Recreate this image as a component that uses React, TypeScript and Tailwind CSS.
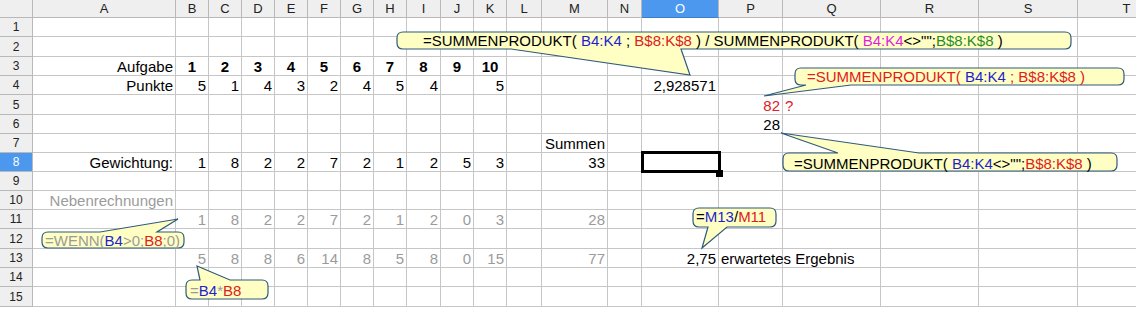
import React from "react";

type Cell = { t: string; a?: "l" | "r" | "c"; c?: string };

const COLS = ["A", "B", "C", "D", "E", "F", "G", "H", "I", "J", "K", "L", "M", "N", "O", "P", "Q", "R", "S", "T"];

const gray = "text-[#9b9b9b]";
const red = "text-[#e0201e]";
const blue = "text-[#1f1fd0]";

// sheet contents, keyed by cell address
const data: Record<string, Cell> = {
  A3: { t: "Aufgabe" },
  A4: { t: "Punkte" },
  A8: { t: "Gewichtung:" },
  A10: { t: "Nebenrechnungen", c: gray },
  M7: { t: "Summen" },
  M8: { t: "33" },
  O4: { t: "2,928571" },
  P5: { t: "82", c: red },
  Q5: { t: "?", a: "l", c: red },
  P6: { t: "28" },
  M11: { t: "28", c: gray },
  M13: { t: "77", c: gray },
  O13: { t: "2,75" },
  P13: { t: "erwartetes Ergebnis", a: "l" },
};

const punkte = ["5", "1", "4", "3", "2", "4", "5", "4", "", "5"];
const gewichtung = ["1", "8", "2", "2", "7", "2", "1", "2", "5", "3"];
const hilf1 = ["1", "8", "2", "2", "7", "2", "1", "2", "0", "3"];
const hilf2 = ["5", "8", "8", "6", "14", "8", "5", "8", "0", "15"];
COLS.slice(1, 11).forEach((col, i) => {
  data[col + "3"] = { t: String(i + 1), a: "c", c: "font-bold" };
  data[col + "4"] = { t: punkte[i] };
  data[col + "8"] = { t: gewichtung[i] };
  data[col + "11"] = { t: hilf1[i], c: gray };
  data[col + "13"] = { t: hilf2[i], c: gray };
});

type Tail = { side: "top" | "bottom"; b1: number; b2: number; tx: number; ty: number };

// rounded box with a pointer, in page coordinates
function calloutPath(x: number, y: number, w: number, h: number, tail: Tail) {
  const r = Math.min(6, h / 2);
  const R = x + w;
  const B = y + h;
  let top = `H ${R - r}`;
  let bottom = `H ${x + r}`;
  if (tail.side === "top") {
    top = `H ${tail.b1} L ${tail.tx} ${tail.ty} L ${tail.b2} ${y} H ${R - r}`;
  } else {
    bottom = `H ${tail.b2} L ${tail.tx} ${tail.ty} L ${tail.b1} ${B} H ${x + r}`;
  }
  return [
    `M ${x + r} ${y}`,
    top,
    `Q ${R} ${y} ${R} ${y + r}`,
    `V ${B - r}`,
    `Q ${R} ${B} ${R - r} ${B}`,
    bottom,
    `Q ${x} ${B} ${x} ${B - r}`,
    `V ${y + r}`,
    `Q ${x} ${y} ${x + r} ${y}`,
    "Z",
  ].join(" ");
}

const shapes: { x: number; y: number; w: number; h: number; tail: Tail }[] = [
  { x: 397, y: 32, w: 674, h: 17, tail: { side: "bottom", b1: 511, b2: 681, tx: 690, ty: 75 } },
  { x: 795, y: 68, w: 329, h: 17, tail: { side: "bottom", b1: 806, b2: 851, tx: 764, ty: 96 } },
  { x: 783, y: 153, w: 334, h: 18, tail: { side: "top", b1: 838, b2: 919, tx: 781, ty: 133 } },
  { x: 42, y: 232, w: 142, h: 16, tail: { side: "top", b1: 100, b2: 157, tx: 178, ty: 219 } },
  { x: 186, y: 280, w: 82, h: 19, tail: { side: "top", b1: 200, b2: 230, tx: 197, ty: 266 } },
  { x: 693, y: 208, w: 83, h: 19, tail: { side: "bottom", b1: 708, b2: 727, tx: 702, ty: 248 } },
];

function Sheet() {
  const rows = Array.from({ length: 15 }, (_, i) => i + 1);
  return (
    <div className="grid grid-cols-[33px_143px_33px_33px_33px_33px_33px_33px_33px_34px_33px_33px_35px_66px_34px_77px_64px_98px_98px_99px_98px] grid-rows-[18px_19px_20px_19px_19px_20px_19px_19px_19px_19px_19px_19px_20px_19px_19px_20px]">
      {/* column headers */}
      <div className="border-r border-b border-[#b9b9b9] bg-[#efefef]" />
      {COLS.map((c) => (
        <div
          key={c}
          className={`flex items-center justify-center border-r border-b border-[#b9b9b9] text-[13px] ${
            c === "O" ? "bg-[#4b98ee] text-white border-b-[#3a7fd0]" : "bg-[#efefef] text-[#222]"
          }`}
        >
          {c}
        </div>
      ))}

      {rows.map((r) => (
        <React.Fragment key={r}>
          <div
            className={`flex items-center justify-center border-r border-b border-[#b9b9b9] text-[12px] ${
              r === 8 ? "bg-[#4b98ee] text-white" : "bg-[#efefef] text-[#222]"
            }`}
          >
            {r}
          </div>
          {COLS.map((c) => {
            const cell = data[c + r];
            return (
              <div
                key={c}
                className={`relative flex items-end border-r border-b border-[#c6c6c6] ${
                  cell?.a === "l" ? "justify-start pl-[2px]" : cell?.a === "c" ? "justify-center" : "justify-end pr-[2px]"
                }`}
              >
                {cell && (
                  <span
                    className={`whitespace-nowrap leading-[17px] text-[15px] ${cell.c ?? "text-black"} ${
                      cell.a === "l" ? "absolute left-[2px] bottom-0" : ""
                    }`}
                  >
                    {cell.t}
                  </span>
                )}
              </div>
            );
          })}
        </React.Fragment>
      ))}
    </div>
  );
}

export default function App() {
  return (
    <div className="relative h-[309px] w-[1136px] overflow-hidden bg-white font-['Liberation_Sans',Arial,sans-serif]">
      <Sheet />

      {/* cell cursor on O8 */}
      <div className="absolute left-[641px] top-[151px] h-[22px] w-[80px] border-[3px] border-black" />
      <div className="absolute left-[716px] top-[170px] h-[7px] w-[7px] bg-black" />

      {/* callout shapes */}
      <svg className="absolute left-0 top-0" width={1136} height={309}>
        {shapes.map((s, i) => (
          <path
            key={i}
            d={calloutPath(s.x, s.y, s.w, s.h, s.tail)}
            fill="#ffffc4"
            stroke="#2f5b7c"
            strokeWidth={1.2}
          />
        ))}
      </svg>

      <div className="pointer-events-none absolute inset-0 whitespace-pre text-[15px] leading-[17px] text-black">
        <div className="absolute left-[423px] top-[32px]">
          =SUMMENPRODUKT( <span className={blue}>B4:K4</span> ; <span className={red}>B$8:K$8</span> ) / SUMMENPRODUKT({" "}
          <span className="text-[#e01ee0]">B4:K4</span>&lt;&gt;"";<span className="text-[#2b8a2b]">B$8:K$8</span> )
        </div>
        <div className={`absolute left-[807px] top-[68px] ${red}`}>
          =SUMMENPRODUKT( <span className={blue}>B4:K4</span> ; B$8:K$8 )
        </div>
        <div className="absolute left-[794px] top-[155px]">
          =SUMMENPRODUKT( <span className={blue}>B4:K4</span>&lt;&gt;"";<span className={red}>B$8:K$8</span> )
        </div>
        <div className={`absolute left-[45px] top-[232px] ${gray}`}>
          =WENN(<span className={blue}>B4</span>&gt;0;<span className={red}>B8</span>;0)
        </div>
        <div className={`absolute left-[190px] top-[282px] ${gray}`}>
          =<span className={blue}>B4</span>*<span className={red}>B8</span>
        </div>
        <div className="absolute left-[696px] top-[208px]">
          =<span className={blue}>M13</span>/<span className={red}>M11</span>
        </div>
      </div>
    </div>
  );
}
